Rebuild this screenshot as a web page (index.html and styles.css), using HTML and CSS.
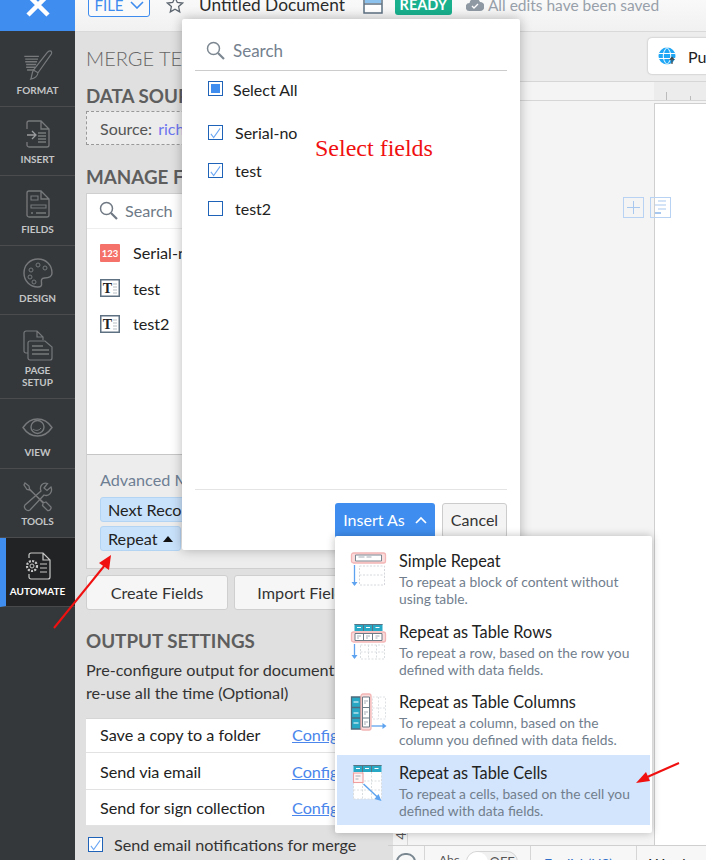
FILE: index.html
```html
<!DOCTYPE html>
<html lang="en">
<head>
<meta charset="utf-8">
<title>Merge Template</title>
<link rel="stylesheet" href="styles.css">
</head>
<body>
<div class="app">
  <nav class="sidebar">
    <div class="close"><svg width="26" height="26" viewBox="0 0 26 26"><path d="M3 3 23 23M23 3 3 23" stroke="#fff" stroke-width="4.500" fill="none"/></svg></div>
    <a class="nav n-format"><svg width="30" height="31" viewBox="0 0 32 34" class="ni"><path d="M1 7h16M2 10h14M2 13h13M3 16h11M3 19h10M4 22h8" stroke="#77797b" stroke-width="1.600"/><path d="M29 1c2 0 2.500 2 1.500 3.500L16 25l-5-3L26 3c1-1.300 2-2 3-2zM11 22l5 3c-.5 4-3 6-8 7 1.500-3 1-7 3-10z" fill="none" stroke="#77797b" stroke-width="1.300"/></svg><span>FORMAT</span></a>
    <a class="nav n-insert"><svg width="24" height="28" viewBox="0 0 24 28" class="ni"><path d="M1 9V3a2 2 0 0 1 2-2h12l8 8v16a2 2 0 0 1-2 2H3a2 2 0 0 1-2-2v-3M15 1v8h8" fill="none" stroke="#77797b" stroke-width="1.300"/><path d="M1 15h8M6 11l4 4-4 4" fill="none" stroke="#9a9c9e" stroke-width="1.300"/><path d="M12 13h8M12 16h8M12 19h8M12 22h8" stroke="#77797b" stroke-width="1.500"/></svg><span>INSERT</span></a>
    <a class="nav n-fields"><svg width="24" height="28" viewBox="0 0 24 28" class="ni"><path d="M3 1h12l8 8v16a2 2 0 0 1-2 2H3a2 2 0 0 1-2-2V3a2 2 0 0 1 2-2zM15 1v8h8" fill="none" stroke="#77797b" stroke-width="1.300"/><path d="M5 6h7v4H5zM5 15h15v3H5z" fill="none" stroke="#77797b" stroke-width="1.100"/><path d="M5 23h2M10 23h10" stroke="#77797b" stroke-width="1.300"/></svg><span>FIELDS</span></a>
    <a class="nav n-design"><svg width="30" height="30" viewBox="0 0 30 30" class="ni"><path d="M15 1C7 1 1 7 1 15s6 14 14 14c3 0 4-1.500 3.500-4-.5-3 0-5 3-5 3.500 0 7.500-.5 7.500-5 0-8-6-14-14-14z" fill="none" stroke="#77797b" stroke-width="1.400"/><circle cx="8" cy="12" r="2" fill="none" stroke="#77797b"/><circle cx="15" cy="7" r="2" fill="none" stroke="#77797b"/><circle cx="22" cy="10" r="2" fill="none" stroke="#77797b"/><circle cx="7" cy="19" r="2" fill="none" stroke="#77797b"/><circle cx="11" cy="24" r="2" fill="none" stroke="#77797b"/></svg><span>DESIGN</span></a>
    <a class="nav n-page"><svg width="30" height="31" viewBox="0 0 30 31" class="ni"><path d="M5 23H3a2 2 0 0 1-2-2V3a2 2 0 0 1 2-2h11l6 6v3M14 1v6h6" fill="none" stroke="#77797b" stroke-width="1.200"/><path d="M7 11h15l7 6v11a2 2 0 0 1-2 2H7a2 2 0 0 1-2-2V13a2 2 0 0 1 2-2z" fill="#34383b" stroke="#77797b" stroke-width="1.200"/><path d="M9 16h11M9 20h17M9 24h17" stroke="#77797b" stroke-width="1.600"/></svg><span>PAGE<br>SETUP</span></a>
    <a class="nav n-view"><svg width="31" height="19" viewBox="0 0 31 19" class="ni"><path d="M1 9.500C5 3.500 10 1 15.500 1S26 3.500 30 9.500C26 15.500 21 18 15.500 18S5 15.500 1 9.500z" fill="none" stroke="#77797b" stroke-width="1.400"/><circle cx="15.500" cy="9" r="6.500" fill="none" stroke="#77797b" stroke-width="1.400"/><path d="M11 11c2 2 6 2 8-1" fill="none" stroke="#77797b"/></svg><span>VIEW</span></a>
    <a class="nav n-tools"><svg width="30" height="30" viewBox="0 0 30 30" class="ni"><path d="M2 1 6 4l.5 3 13.500 14 3-1 5 5c.5 2-1.500 4-3.500 3.500l-5-5 1-3L7 8 4 7.500 1 3z" fill="none" stroke="#77797b" stroke-width="1.300"/><path d="M28 5l-4 3.500L21 6l3.500-4.500C20 0 16 4 18 9L2 23c-2 3 2 7 5 5l14-15c5 2 9-3 7-8z" fill="none" stroke="#77797b" stroke-width="1.300"/></svg><span>TOOLS</span></a>
    <a class="nav n-auto active"><svg width="26" height="28" viewBox="0 0 26 28" class="ni"><path d="M4 6V3a2 2 0 0 1 2-2h12l7 7v17a2 2 0 0 1-2 2H6a2 2 0 0 1-2-2v-3M18 1v7h7" fill="none" stroke="#c8c8c8" stroke-width="1.200"/><circle cx="7" cy="14" r="5" fill="none" stroke="#c8c8c8" stroke-width="2.200" stroke-dasharray="2 1.300"/><circle cx="7" cy="14" r="2" fill="none" stroke="#c8c8c8"/><path d="M15 12h7M15 16h7M15 20h7" stroke="#c8c8c8" stroke-width="1.200"/></svg><span>AUTOMATE</span></a>
    <div class="nav-rest"></div>
  </nav>

  <div class="main">
    <header class="topbar">
      <button class="file-btn">FILE <svg width="14" height="8" viewBox="0 0 14 8"><path d="M1 1l6 6 6-6" fill="none" stroke="#3f8cef" stroke-width="1.600"/></svg></button>
      <svg class="star" width="18" height="18" viewBox="0 0 18 18"><path d="M9 1.500l2.300 5 5.200.6-3.900 3.500 1.100 5.300L9 13.200 4.300 15.900l1.100-5.300L1.500 7.100l5.200-.6z" fill="none" stroke="#5d6670" stroke-width="1.300"/></svg>
      <span class="doc-title">Untitled Document</span>
      <svg class="doc-ico" width="20" height="16" viewBox="0 0 20 16"><path d="M1 -4h18v19H1z" fill="#fff" stroke="#5e7183" stroke-width="1.500"/><path d="M2 0h16v5H2z" fill="#8cc3ee"/><path d="M1 6h18" stroke="#5e7183" stroke-width="1.500"/></svg>
      <span class="ready">READY</span>
      <svg class="cloud" width="18" height="13" viewBox="0 0 18 13"><path d="M4 13a4 4 0 0 1-.5-8A5.500 5.500 0 0 1 14 4a4.500 4.500 0 0 1 0 9z" fill="#8f99a3"/><path d="M6 8l2 2 4-4" fill="none" stroke="#fff" stroke-width="1.300"/></svg>
      <span class="saved">All edits have been saved</span>
    </header>

    <div class="work">
      <aside class="panel">
        <h1 class="panel-title">MERGE TEMPLATE</h1>
        <h2 class="sec sec-data">DATA SOURCE</h2>
        <div class="source">Source: <a>richard sheet</a></div>
        <h2 class="sec sec-manage">MANAGE FIELDS</h2>
        <div class="field-box">
          <div class="field-search"><svg width="19" height="19" viewBox="0 0 19 19"><circle cx="7.500" cy="7.500" r="6" fill="none" stroke="#6f7883" stroke-width="1.500"/><path d="M12 12l6 6" stroke="#6f7883" stroke-width="2.200"/></svg><span>Search</span></div>
          <ul class="field-list">
            <li><svg class="fi" width="20" height="18" viewBox="0 0 20 18"><rect width="20" height="18" rx="1" fill="#f4726a"/><text x="10" y="13" text-anchor="middle" class="fi-num">123</text></svg>Serial-no</li>
            <li><svg class="fi" width="20" height="18" viewBox="0 0 20 18"><use href="#t-ico"/></svg>test</li>
            <li><svg class="fi" width="20" height="18" viewBox="0 0 20 18"><use href="#t-ico"/></svg>test2</li>
          </ul>
          <div class="advanced">
            <div class="adv-label">Advanced Merge</div>
            <span class="chip">Next Record</span>
            <span class="chip">Repeat <i class="up"></i></span>
          </div>
        </div>
        <div class="actions"><button class="act act-create">Create Fields</button><button class="act act-import">Import Fields</button></div>
        <h2 class="sec sec-output">OUTPUT SETTINGS</h2>
        <p class="output-text">Pre-configure output for document that you<br>re-use all the time (Optional)</p>
        <div class="out-table">
          <div class="out-row"><span>Save a copy to a folder</span><a>Configure</a></div>
          <div class="out-row"><span>Send via email</span><a>Configure</a></div>
          <div class="out-row"><span>Send for sign collection</span><a>Configure</a></div>
        </div>
        <label class="notify"><i class="cb"><svg width="14" height="14" viewBox="0 0 14 14"><path d="M2 8l3 4 7-10" fill="none" stroke="#6aa6f3" stroke-width="1.100"/></svg></i>Send email notifications for merge</label>
      </aside>

      <section class="doc-area">
        <div class="toolbar"><div class="publish"><svg width="18" height="18" viewBox="0 0 18 18"><circle cx="9" cy="9" r="8.500" fill="#1fa7f5"/><path d="M.5 6.500h17M.5 11.500h17M9 .5C4 5 4 13 9 17.500M9 .5C14 5 14 13 9 17.500" stroke="#fff" fill="none"/><path d="M14 17v-6M11.800 13l2.200-2.500 2.200 2.500" stroke="#444" fill="none" stroke-width="1.200"/></svg><span>Publish</span></div></div>
        <div class="ruler-row"><div class="ruler-h"><i class="t1"></i><i class="t2"></i></div></div>
        <div class="canvas-row">
          <div class="ruler-v"><span>4</span></div>
          <div class="canvas">
            <div class="page-tools">
              <span class="pt"><svg width="21" height="21" viewBox="0 0 21 21"><path d="M10.500 4v13M4 10.500h13" stroke="#a9c8ef"/></svg></span>
              <span class="pt"><svg width="21" height="21" viewBox="0 0 21 21"><path d="M8 4h8M5 8h11M8 12h8" stroke="#a9c8ef"/><path d="M5 16h6" stroke="#a9c8ef" stroke-width="2"/></svg></span>
            </div>
          </div>
          <div class="page"></div>
        </div>
        <div class="statusbar">
          <span class="st-circle"></span>
          <span class="st-abc"><span class="abc-txt">Abc</span><span class="toggle"><b></b>OFF</span></span>
          <span class="st-lang">English(US)</span>
          <span class="st-words">Words</span>
        </div>
      </section>
    </div>
  </div>

  <div class="popover">
    <div class="pop-search"><svg width="19" height="19" viewBox="0 0 19 19"><circle cx="7.500" cy="7.500" r="6" fill="none" stroke="#7c8791" stroke-width="1.500"/><path d="M12 12l6 6" stroke="#7c8791" stroke-width="2.200"/></svg><span>Search</span></div>
    <div class="pop-all"><i class="cb partial"></i>Select All</div>
    <ul class="pop-list">
      <li class="first"><i class="cb"><svg width="14" height="14" viewBox="0 0 14 14"><path d="M2 8l3 4 7-10" fill="none" stroke="#6aa6f3" stroke-width="1.100"/></svg></i>Serial-no</li>
      <li><i class="cb"><svg width="14" height="14" viewBox="0 0 14 14"><path d="M2 8l3 4 7-10" fill="none" stroke="#6aa6f3" stroke-width="1.100"/></svg></i>test</li>
      <li><i class="cb"></i>test2</li>
    </ul>
    <div class="pop-foot">
      <button class="insert">Insert As <svg width="12" height="8" viewBox="0 0 12 8"><path d="M1 7l5-5 5 5" fill="none" stroke="#fff" stroke-width="1.700"/></svg></button>
      <button class="cancel">Cancel</button>
    </div>
  </div>

  <div class="note">Select fields</div>

  <div class="menu">
    <div class="m-item">
      <svg class="m-ico" width="37" height="36" viewBox="0 0 36 36"><use href="#i-simple"/></svg>
      <div><div class="m-title">Simple Repeat</div><div class="m-desc">To repeat a block of content without using table.</div></div>
    </div>
    <div class="m-item">
      <svg class="m-ico" width="37" height="38" viewBox="0 0 36 38"><use href="#i-rows"/></svg>
      <div><div class="m-title">Repeat as Table Rows</div><div class="m-desc">To repeat a row, based on the row you defined with data fields.</div></div>
    </div>
    <div class="m-item">
      <svg class="m-ico" width="37" height="38" viewBox="0 0 36 38"><use href="#i-cols"/></svg>
      <div><div class="m-title">Repeat as Table Columns</div><div class="m-desc">To repeat a column, based on the column you defined with data fields.</div></div>
    </div>
    <div class="m-item sel">
      <svg class="m-ico" width="37" height="38" viewBox="0 0 36 38"><use href="#i-cells"/></svg>
      <div><div class="m-title">Repeat as Table Cells</div><div class="m-desc">To repeat a cells, based on the cell you defined with data fields.</div></div>
    </div>
  </div>

  <svg class="arrow arrow-a" width="64" height="86" viewBox="0 0 64 86"><path d="M1 83 52 20" stroke="#f01010" stroke-width="2"/><path d="M58 10 46 18 56 25z" fill="#f01010"/></svg>
  <svg class="arrow arrow-b" width="52" height="32" viewBox="0 0 52 32"><path d="M49 8 15 23" stroke="#f01010" stroke-width="2"/><path d="M6 28 16 17 20 26z" fill="#f01010"/></svg>

  <svg class="defs" width="0" height="0">
    <defs>
      <g id="t-ico"><rect x=".75" y=".75" width="18.500" height="16.500" fill="#fff" stroke="#5e7183" stroke-width="1.500"/><text x="7.500" y="13.500" text-anchor="middle" class="fi-t">T</text><path d="M13 5h4M13 8h4M13 11h4M13 14h4" stroke="#b9bfc5"/></g>
      <g id="i-simple"><rect x="1" y="1" width="34" height="10" rx="2" fill="#fbdcdc" stroke="#f3b5b5" stroke-width="1.300"/><path d="M5 3h26v6H5z" fill="#fff" stroke="#7a8791"/><path d="M8 5h6M16 5h5" stroke="#a5adb5"/><path d="M9 14h25v19H9zM9 23h25" fill="none" stroke="#d4d8dc" stroke-dasharray="2 1.500"/><path d="M4 13v20" stroke="#5da3ef" stroke-width="1.300"/><path d="M1 30l3 4 3-4z" fill="#5da3ef"/></g>
      <g id="i-rows"><rect x="4" y="1" width="28" height="7" fill="#27a9c6"/><path d="M4 1h28v1H4z" fill="#5b7483"/><path d="M6.500 4.500h4M15.500 4.500h4M25 4.500h4" stroke="#fff"/><path d="M13 1v7M22 1v7" stroke="#5b7483"/><rect x="1" y="9" width="34" height="10" rx="2" fill="#fbdcdc" stroke="#f3b5b5" stroke-width="1.300"/><path d="M4.500 10.500h27v7h-27zM13 10v8M22 10v8" fill="#fff" stroke="#6d7b86"/><path d="M6.500 13h4M15.500 13h4M25 13h4M6.500 15h2M15.500 15h2M25 15h2" stroke="#a5adb5"/><path d="M10 22h24v14H10zM10 29h24M18 22v14M26 22v14" fill="none" stroke="#d9dde0" stroke-dasharray="2 1.500"/><path d="M4 21v14" stroke="#5da3ef" stroke-width="1.300"/><path d="M1 32l3 4 3-4z" fill="#5da3ef"/></g>
      <g id="i-cols"><rect x="1" y="4" width="9" height="32" fill="#27a9c6"/><path d="M1 4h9v32H1zM1 14.500h9M1 25h9" fill="none" stroke="#4f6b7b" stroke-width="1.300"/><path d="M3 9h5M3 20h5M3 30h5" stroke="#fff"/><rect x="10.500" y="1" width="10" height="36" rx="2" fill="#fbdcdc" stroke="#f3b5b5" stroke-width="1.300"/><path d="M12 4h7v30h-7zM12 14.500h7M12 25h7" fill="#fff" stroke="#6d7b86"/><path d="M13.500 8h4M13.500 10h2M13.500 19h4M13.500 21h2M13.500 29h4M13.500 31h2" stroke="#a5adb5"/><path d="M22 4h13v22H22zM28 4v22M22 15h13" fill="none" stroke="#dfe2e5" stroke-dasharray="2 1.500"/><path d="M21 33h13" stroke="#5da3ef" stroke-width="1.300"/><path d="M32 30l4 3-4 3z" fill="#5da3ef"/></g>
      <g id="i-cells"><rect x="3" y="1" width="28" height="7" fill="#27a9c6"/><path d="M3 1h28v1H3z" fill="#5b7483"/><path d="M5.500 4.500h4M14.500 4.500h4M24 4.500h4" stroke="#fff"/><path d="M12 1v7M21 1v7" stroke="#5b7483"/><path d="M3 8h28v27H3z" fill="#fff"/><path d="M3 17h28M3 26h28M12 8v27M21 8v27M31 8v27M3 35h28M3 8v27" fill="none" stroke="#d9dde0" stroke-dasharray="2 1.500"/><rect x="3" y="9" width="9.500" height="9.500" fill="#fff3f3" stroke="#ef9f9f" stroke-width="1.100"/><path d="M5 12h5M5 15h3" stroke="#a5adb5"/><path d="M13 20l16 15" stroke="#5da3ef" stroke-width="1.500"/><path d="M28 30l3 7-7-2z" fill="#5da3ef"/></g>
    </defs>
  </svg>
</div>
</body>
</html>
```

FILE: styles.css
```css
* { box-sizing: border-box; }
html, body { margin: 0; padding: 0; }
body { width: 706px; height: 860px; overflow: hidden; font-family: Lato, "Liberation Sans", sans-serif; color: #222; }
ul { list-style: none; margin: 0; padding: 0; }
h1, h2, p { margin: 0; }
button { font-family: inherit; }

.app { position: relative; display: grid; grid-template-columns: 75px 631px; width: 706px; height: 860px; overflow: hidden; }

/* sidebar */
.sidebar { display: grid; grid-template-rows: 31px 76px 69px 70px 69px 84px 70px 69px 69px 1fr; background: #34383b; }
.close { background: #3f8eef; display: flex; align-items: center; justify-content: center; padding-bottom: 21px; height: 31px; }
.close svg { flex: none; }
.nav { display: flex; flex-direction: column; align-items: center; justify-content: flex-start; color: #c3c5c6; font-size: 10px; font-weight: 700; line-height: 12px; text-align: center; border-bottom: 1px solid #4a4c4e; }
.ni { flex: none; }
.n-format { padding-top: 19px; gap: 3px; }
.n-insert { padding-top: 13px; gap: 5px; }
.n-fields { padding-top: 14px; gap: 5px; }
.n-design { padding-top: 12px; gap: 4px; }
.n-page { padding-top: 15px; gap: 3px; }
.n-view { padding-top: 19px; gap: 9px; }
.n-tools { padding-top: 13px; gap: 3px; }
.n-auto { padding-top: 14px; gap: 5px; }
.nav.active { background: #222324; color: #fff; border-left: 6px solid #3f8eef; border-bottom-color: #47494b; padding-right: 6px; }
.nav-rest { background: #34383b; }

/* top bar */
.main { display: flex; flex-direction: column; min-width: 0; }
.topbar { height: 32px; flex: none; display: flex; align-items: center; padding: 0 0 22px 13px; background: linear-gradient(#f9f9f9, #f1f1f1); border-bottom: 1px solid #d9d9d9; }
.file-btn { flex: none; width: 62px; height: 25px; padding: 0; border: 1px solid #3f8cef; border-radius: 3px; background: #fafafa; color: #3f8cef; font-size: 15px; display: flex; align-items: center; justify-content: center; gap: 6px; line-height: 16px; }
.star { flex: none; margin-left: 16px; }
.doc-title { flex: none; margin-left: 15px; font-size: 17.300px; white-space: nowrap; color: #2b2b2b; }
.doc-ico { flex: none; margin-left: 18px; margin-top: 2px; }
.ready { flex: none; margin-left: 12px; width: 57px; height: 20px; background: #19b08e; color: #fff; font-size: 14.500px; font-weight: 700; text-align: center; line-height: 20px; border-radius: 3px; }
.cloud { flex: none; margin-left: 14px; }
.saved { flex: none; margin-left: 4px; font-size: 15.500px; color: #97a0aa; white-space: nowrap; }

/* workspace */
.work { flex: 1; display: grid; grid-template-columns: 313px 318px; min-height: 0; }

/* panel */
.panel { background: #e0e0e0; padding: 15px 0 0 11px; overflow: hidden; }
.panel-title { font-size: 20px; font-weight: 300; color: #666; line-height: 22px; white-space: nowrap; }
.sec { font-size: 18.800px; font-weight: 700; color: #5e5e5e; line-height: 22px; white-space: nowrap; }
.sec-data { margin-top: 16px; }
.sec-manage { margin-top: 21px; }
.sec-output { margin-top: 20px; }
.source { margin-top: 4px; width: 290px; height: 34px; border: 1px dashed #999; background: #ececec; padding-left: 13px; line-height: 33px; font-size: 16px; color: #555; white-space: nowrap; }
.source a { color: #6c74f0; margin-left: 2px; }

.field-box { margin-top: 5px; width: 290px; height: 376px; background: #fff; border: 1px solid #cfcfcf; display: flex; flex-direction: column; }
.field-search { flex: none; display: flex; align-items: center; height: 35px; padding: 0 0 2px 12px; gap: 7px; border-bottom: 1px solid #eee; font-size: 16.200px; color: #6e7a87; }
.field-list { flex: none; height: 225px; padding-top: 6px; }
.field-list li { display: flex; align-items: center; gap: 13px; height: 35.500px; padding-left: 13px; font-size: 16.200px; color: #222; }
.fi { flex: none; }
.fi-num { font: 700 9.500px Lato, sans-serif; fill: #fff; }
.fi-t { font: 700 14px "Liberation Serif", serif; fill: #222; }
.advanced { flex: 1; background: #ededed; border-top: 1px solid #c6c6c6; padding: 16px 0 0 13px; display: flex; flex-direction: column; align-items: flex-start; gap: 4px; }
.adv-label { color: #6e7f94; font-size: 16.200px; line-height: 18px; margin-bottom: 4px; white-space: nowrap; }
.chip { display: inline-flex; align-items: center; height: 25px; padding: 0 7px; background: #c9e2fb; border: 1px solid #b4d4f3; border-radius: 3px; font-size: 16.200px; color: #222; white-space: nowrap; }
.up { display: inline-block; width: 0; height: 0; margin-left: 5px; border: 5px solid transparent; border-top: 0; border-bottom: 6px solid #111; }

.actions { margin-top: 6px; display: flex; gap: 6px; }
.act { height: 35px; border: 1px solid #cfcfcf; border-radius: 3px; background: #f6f6f6; font-size: 16.200px; color: #333; padding: 0; }
.act-create { width: 142px; }
.act-import { width: 140px; }
.output-text { margin-top: 6px; font-size: 16.200px; line-height: 23px; color: #333; white-space: nowrap; }
.out-table { margin-top: 14px; width: 290px; background: #fff; border-top: 1px solid #d6d6d6; }
.out-row { height: 37px; display: flex; align-items: center; padding-left: 14px; border-bottom: 1px solid #e2e2e2; font-size: 16.200px; color: #222; }
.out-row:first-child { height: 34px; padding-bottom: 2px; }
.out-row:last-child { height: 36px; }
.out-row span { width: 192px; flex: none; white-space: nowrap; }
.out-row a { color: #4a86ec; text-decoration: underline; }
.notify { margin-top: 9px; display: flex; align-items: center; gap: 11px; padding-left: 2px; font-size: 16.200px; color: #333; white-space: nowrap; }

.cb { flex: none; display: inline-flex; align-items: center; justify-content: center; width: 15px; height: 15px; border: 1px solid #1e63b8; background: #fff; }
.cb.partial::before { content: ""; width: 9px; height: 9px; background: #3f8eef; }

/* right side */
.doc-area { display: flex; flex-direction: column; min-width: 0; background: #f4f4f4; }
.toolbar { flex: none; height: 50px; background: #ededed; border-bottom: 1px solid #d6d6d6; padding: 6px 0 0 260px; }
.publish { display: flex; align-items: center; gap: 12px; width: 70px; height: 36px; padding-left: 10px; background: #fff; border-radius: 4px; box-shadow: 0 0 2px rgba(0,0,0,.3); font-size: 16px; color: #222; white-space: nowrap; }
.publish svg { flex: none; }
.ruler-row { flex: none; height: 19px; background: #f4f4f4; border-bottom: 1px solid #d6d6d6; padding-left: 266px; }
.ruler-h { position: relative; height: 18px; background: #ececec; }
.ruler-h i { position: absolute; bottom: 0; width: 1px; background: #bbb; }
.t1 { left: 12px; height: 8px; }
.t2 { left: 36px; height: 4px; }
.canvas-row { flex: 1; display: flex; min-height: 0; border-bottom: 1px solid #cfcfcf; }
.ruler-v { flex: none; width: 20px; position: relative; border-left: 5px solid #e0e0e0; border-right: 1px solid #d6d6d6; background: #f4f4f4; }
.ruler-v span { position: absolute; bottom: 1px; right: 2px; transform: rotate(-90deg); font-size: 13px; color: #555; }
.canvas { flex: none; width: 246px; position: relative; background: #f4f4f4; }
.page-tools { position: absolute; top: 96px; left: 215px; display: flex; gap: 6px; }
.pt { width: 21px; height: 21px; display: block; border: 1px solid #b7d2f3; }
.pt svg { display: block; margin: -1px; }
.page { flex: 1; background: #fff; border-left: 1px solid #cfcfcf; margin-top: 2px; border-top: 1px solid #cfcfcf; }
.statusbar { flex: none; height: 14px; display: flex; align-items: flex-start; background: #f7f7f7; font-size: 14px; color: #555; overflow: hidden; border-left: 5px solid #e0e0e0; }
.st-circle { flex: none; width: 20px; height: 22px; margin: 7px 8px 0 3px; border: 2px solid #7a8791; border-radius: 9px; }
.st-abc { flex: none; display: flex; gap: 6px; height: 14px; border-left: 1px solid #d6d6d6; padding: 5px 0 0 14px; width: 106px; font-size: 12px; line-height: 16px; white-space: nowrap; }
.abc-txt { margin-top: 1px; }
.toggle { flex: none; display: flex; align-items: center; gap: 2px; height: 22px; width: 52px; border: 1px solid #d5d5d5; border-radius: 11px; font-size: 13px; background: #f1f1f1; }
.toggle b { width: 21px; height: 20px; border-radius: 50%; background: #fff; }
.st-lang { flex: none; width: 106px; height: 14px; padding: 10px 0 0 13px; border-left: 1px solid #d6d6d6; color: #2f6fc9; line-height: 16px; }
.st-words { height: 14px; padding: 10px 0 0 12px; border-left: 1px solid #d6d6d6; color: #222; line-height: 16px; font-size: 15px; }

/* popover */
.popover { position: absolute; left: 182px; top: 19px; width: 338px; height: 531px; background: #fff; border-radius: 2px; box-shadow: 0 0 12px rgba(0,0,0,.28); padding: 0 13px; display: flex; flex-direction: column; }
.pop-search { flex: none; height: 52px; display: flex; align-items: center; padding: 12px 0 0 11px; gap: 8px; border-bottom: 1px solid #ccc; font-size: 17px; color: #75818e; }
.pop-all { flex: none; margin-top: 8px; height: 20px; display: flex; align-items: center; gap: 10px; padding-left: 13px; font-size: 16px; color: #222; }
.pop-all .cb { margin-top: -1px; }
.pop-list { flex: 1; padding-top: 14px; }
.pop-list li { height: 38px; display: flex; align-items: center; gap: 12px; padding-left: 13px; font-size: 16px; color: #222; }
.pop-list .cb { margin-top: 1px; }
.pop-foot { flex: none; height: 61px; border-top: 1px solid #e4e4e4; padding-top: 13px; display: flex; justify-content: flex-end; gap: 7px; }
.insert { width: 100px; height: 35px; background: #3f8eef; border: 0; border-radius: 3px 3px 0 0; color: #fff; font-size: 16px; display: flex; align-items: center; justify-content: center; gap: 10px; padding: 0 0 2px; }
.cancel { width: 65px; height: 35px; background: #f4f4f4; border: 1px solid #ccc; border-radius: 3px; font-size: 16px; color: #333; padding: 0 0 2px; }

.note { position: absolute; left: 315px; top: 134px; font-family: "Liberation Serif", serif; font-size: 24px; line-height: 28px; color: #f01010; white-space: nowrap; }

/* insert menu */
.menu { position: absolute; left: 335px; top: 536px; width: 317px; height: 297px; background: #fff; border-radius: 2px; box-shadow: 0 0 8px rgba(0,0,0,.25); padding: 7px 2px 0; }
.m-item { display: flex; gap: 12px; height: 70.500px; padding: 9px 12px 0 13px; }
.m-ico { flex: none; }
.m-item > div { width: 250px; }
.m-title { font-size: 16.300px; line-height: 18px; color: #222; }
.m-desc { margin-top: 3px; font-size: 13.800px; line-height: 17px; color: #717e8d; }
.m-item.sel { background: #d3e5fc; }

.arrow { position: absolute; overflow: visible; }
.arrow-a { left: 53px; top: 545px; }
.arrow-b { left: 630px; top: 755px; }
.defs { position: absolute; }
```
